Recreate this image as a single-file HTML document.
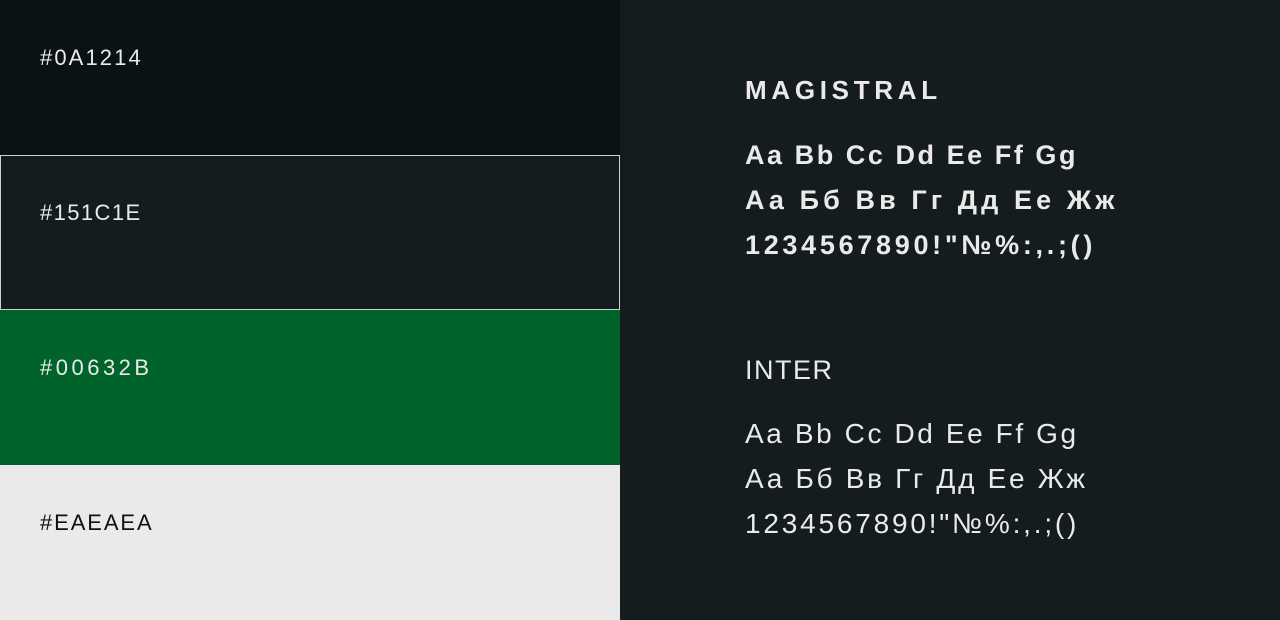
<!DOCTYPE html>
<html><head><meta charset="utf-8"><style>
*{margin:0;padding:0;box-sizing:border-box}
body{width:1280px;height:620px;overflow:hidden;background:#151C1E;font-family:"Liberation Sans",sans-serif;position:relative}
.sw{position:absolute;left:0;width:620px;height:155px}
.sw span{position:absolute;left:40px;top:45px;font-size:22px;letter-spacing:1px;color:#EAEAEA}
.r{position:absolute;left:745px;color:#EAEAEA;white-space:nowrap}
.m{font-weight:bold;font-size:27px}
.i{font-size:28px;letter-spacing:2.6px;font-weight:normal}
</style></head><body>
<div class="sw" style="top:0;background:#0A1214"><span style="letter-spacing:2.1px">#0A1214</span></div>
<div class="sw" style="top:155px;background:#151C1E;border:1px solid #d0d0d0"><span style="left:39px;top:44px;letter-spacing:1.4px">#151C1E</span></div>
<div class="sw" style="top:310px;background:#00632B"><span style="letter-spacing:3.5px">#00632B</span></div>
<div class="sw" style="top:465px;background:#EAEAEA"><span style="color:#111;letter-spacing:1.9px">#EAEAEA</span></div>
<div class="r m" style="top:75px;font-size:26px;letter-spacing:4.7px">MAGISTRAL</div>
<div class="r m" style="top:140px;letter-spacing:2.55px">Aa Bb Cc Dd Ee Ff Gg</div>
<div class="r m" style="top:185px;letter-spacing:4.1px">Аа Бб Вв Гг Дд Ее Жж</div>
<div class="r m" style="top:230px;letter-spacing:3.7px">1234567890!"№%:,.;()</div>
<div class="r i" style="top:355px;font-size:27px;letter-spacing:1.5px">INTER</div>
<div class="r i" style="top:418px">Aa Bb Cc Dd Ee Ff Gg</div>
<div class="r i" style="top:463px;letter-spacing:2.7px">Аа Бб Вв Гг Дд Ее Жж</div>
<div class="r i" style="top:508px;letter-spacing:2.8px">1234567890!"№%:,.;()</div>
</body></html>
